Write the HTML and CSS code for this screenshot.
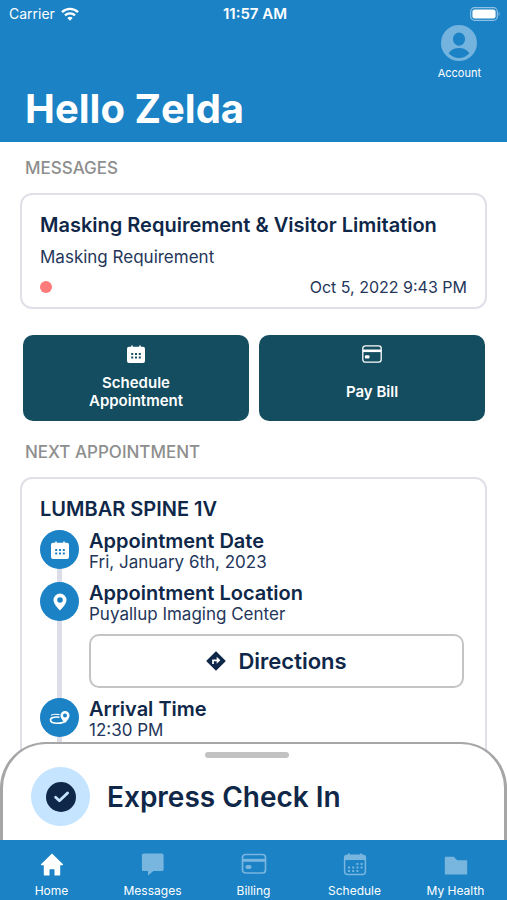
FILE: index.html
```html
<!DOCTYPE html>
<html lang="en">
<head>
    <meta charset="UTF-8">
    <meta name="viewport" content="width=device-width, initial-scale=1.0">
    <title>Patient Home</title>
    <link rel="stylesheet" href="styles.css">
</head>
<body>
    <div class="app">
        <header class="header">
            <div class="status-bar">
                <div class="carrier">
                    <span>Carrier</span>
                    <svg width="18" height="14" viewBox="0 0 18 14" fill="none" stroke="#fff" stroke-width="2.4">
                        <path d="M1 5.2a11.4 11.4 0 0 1 16 0"/>
                        <path d="M4 8.4a7.2 7.2 0 0 1 10 0"/>
                        <path d="M9 13.8L6.3 11a3.8 3.8 0 0 1 5.4 0z" fill="#fff" stroke="none"/>
                    </svg>
                </div>
                <span class="clock">11:57 AM</span>
                <svg class="battery" width="31" height="14" viewBox="0 0 31 14">
                    <rect x="0.7" y="0.7" width="26.6" height="12.6" rx="3.8" fill="none" stroke="#8fc1e4" stroke-width="1.2"/>
                    <rect x="2.4" y="2.4" width="23.2" height="9.2" rx="2.4" fill="#fff"/>
                    <path d="M28.7 4.8q2 2.2 0 4.4z" fill="#8fc1e4"/>
                </svg>
            </div>
            <div class="hero">
                <h1>Hello Zelda</h1>
                <a class="account" href="#account">
                    <svg width="36" height="36" viewBox="0 0 36 36">
                        <circle cx="18" cy="18" r="18" fill="#74b3de"/>
                        <ellipse cx="18" cy="14.2" rx="6" ry="6.6" fill="#1a82c5"/>
                        <path d="M7.6 28.3C9.8 24.8 13.6 23 18 23s8.2 1.8 10.4 5.3C25.6 31.3 22 33 18 33s-7.6-1.7-10.4-4.7z" fill="#1a82c5"/>
                    </svg>
                    <span>Account</span>
                </a>
            </div>
        </header>

        <div class="screen">
            <main class="content">
                <h2 class="section-title">MESSAGES</h2>
                <article class="card message">
                    <h3>Masking Requirement &amp; Visitor Limitation</h3>
                    <p>Masking Requirement</p>
                    <div class="message-meta">
                        <span class="unread-dot"></span>
                        <time>Oct 5, 2022 9:43 PM</time>
                    </div>
                </article>

                <div class="actions">
                    <button class="action" type="button">
                        <svg width="18" height="18" viewBox="0 0 18 18">
                            <path fill="#fff" d="M2 1.8h2.2V.5h1.6v1.3h6.4V.5h1.6v1.3H16a2 2 0 0 1 2 2V16a2 2 0 0 1-2 2H2a2 2 0 0 1-2-2V3.8a2 2 0 0 1 2-2z"/>
                            <path stroke="#134d5f" stroke-width="2" stroke-dasharray="2 1.8" d="M4.2 9h9.6M4.2 12.6h9.6"/>
                        </svg>
                        <span>Schedule<br>Appointment</span>
                    </button>
                    <button class="action" type="button">
                        <svg width="20" height="18" viewBox="0 0 20 18" fill="none" stroke="#fff">
                            <rect x="0.8" y="0.8" width="18.4" height="16.4" rx="2.6" stroke-width="1.3"/>
                            <path d="M1 5.8h18" stroke-width="2.6"/>
                            <rect x="2.9" y="10.3" width="4.6" height="3.2" rx="1" fill="#fff" stroke="none"/>
                        </svg>
                        <span>Pay Bill</span>
                    </button>
                </div>

                <h2 class="section-title">NEXT APPOINTMENT</h2>
                <article class="card appointment">
                    <h3>LUMBAR SPINE 1V</h3>
                    <ul class="timeline">
                        <li>
                            <span class="marker">
                                <svg width="18" height="18" viewBox="0 0 18 18">
                                    <path fill="#fff" d="M2 1.8h2.2V.5h1.6v1.3h6.4V.5h1.6v1.3H16a2 2 0 0 1 2 2V16a2 2 0 0 1-2 2H2a2 2 0 0 1-2-2V3.8a2 2 0 0 1 2-2z"/>
                                    <path stroke="#1a82c5" stroke-width="2" stroke-dasharray="2 1.8" d="M4.2 9h9.6M4.2 12.6h9.6"/>
                                </svg>
                            </span>
                            <div class="step">
                                <h4>Appointment Date</h4>
                                <p>Fri, January 6th, 2023</p>
                            </div>
                        </li>
                        <li>
                            <span class="marker">
                                <svg width="14" height="18" viewBox="0 0 14 18">
                                    <path fill="#fff" fill-rule="evenodd" d="M7 .5A6.5 6.5 0 0 1 13.5 7C13.5 10.5 9.5 15 7 17.5 4.5 15 .5 10.5 .5 7A6.5 6.5 0 0 1 7 .5zm0 3.7a2.8 2.8 0 1 0 0 5.6 2.8 2.8 0 0 0 0-5.6z"/>
                                </svg>
                            </span>
                            <div class="step">
                                <h4>Appointment Location</h4>
                                <p>Puyallup Imaging Center</p>
                                <button class="directions" type="button">
                                    <svg width="20" height="20" viewBox="0 0 20 20">
                                        <path fill="#0f2748" stroke="#0f2748" stroke-width="1.6" stroke-linejoin="round" d="M10 1.2L18.8 10 10 18.8 1.2 10z"/>
                                        <path fill="none" stroke="#fff" stroke-width="1.7" d="M7 13V9.3h4.5"/>
                                        <path fill="#fff" d="M10.7 5.8L14.4 9.3l-3.7 3.5z"/>
                                    </svg>
                                    <span>Directions</span>
                                </button>
                            </div>
                        </li>
                        <li>
                            <span class="marker">
                                <svg width="22" height="16" viewBox="0 0 22 16">
                                    <path fill="#fff" fill-rule="evenodd" d="M16 1a4.5 4.5 0 0 1 4.5 4.5c0 2.4-2.6 5.7-4.5 7.5-1.9-1.8-4.5-5.1-4.5-7.5A4.5 4.5 0 0 1 16 1zm0 2.5a2 2 0 1 0 0 4 2 2 0 0 0 0-4z"/>
                                    <path fill="none" stroke="#fff" stroke-width="1.1" d="M10.5 4.6C6 4 2.5 4.6 2.3 5.6"/>
                                    <path fill="none" stroke="#fff" stroke-width="1.6" d="M10.5 7.2C5 6.5 1.5 7.5 1.5 10c0 2.3 3 3.2 6.5 3.2 4 0 7.5-.8 7.5-2"/>
                                </svg>
                            </span>
                            <div class="step">
                                <h4>Arrival Time</h4>
                                <p>12:30 PM</p>
                            </div>
                        </li>
                    </ul>
                </article>
            </main>

            <section class="sheet">
                <div class="handle"></div>
                <a class="check-in" href="#check-in">
                    <span class="check-badge">
                        <svg width="30" height="30" viewBox="0 0 30 30">
                            <circle cx="15" cy="15" r="15" fill="#0f2748"/>
                            <path d="M9.6 15.2l3.8 3.6 8.2-7.8" fill="none" stroke="#c4e4ff" stroke-width="2.8" stroke-linecap="round" stroke-linejoin="round"/>
                        </svg>
                    </span>
                    <span>Express Check In</span>
                </a>
            </section>
        </div>

        <nav class="tabs">
            <a class="tab active" href="#home">
                <svg width="24" height="24" viewBox="0 0 24 24" fill="currentColor">
                    <path d="M12 1.5L23 12.2q.5 1-.6 1H20.2V22.5a1 1 0 0 1-1 1H14.5V17.2H9.5v6.3H4.8a1 1 0 0 1-1-1v-9.3H1.6q-1.1 0-.6-1z"/>
                </svg>
                <span>Home</span>
            </a>
            <a class="tab" href="#messages">
                <svg width="24" height="24" viewBox="0 0 24 24" fill="currentColor">
                    <path d="M2.5 1.5h18.5a1.6 1.6 0 0 1 1.6 1.6v14.3a1.6 1.6 0 0 1-1.6 1.6H12.5L7 23.5V19H2.5A1.6 1.6 0 0 1 .9 17.4V3.1a1.6 1.6 0 0 1 1.6-1.6z"/>
                </svg>
                <span>Messages</span>
            </a>
            <a class="tab" href="#billing">
                <svg width="26" height="24" viewBox="0 0 26 24" fill="none" stroke="currentColor">
                    <rect x="1.5" y="2.5" width="23" height="18.5" rx="3" stroke-width="1.7"/>
                    <path d="M1.5 8.3h23" stroke-width="3"/>
                    <rect x="4.5" y="13" width="6" height="4" rx="1.8" fill="currentColor" stroke="none"/>
                </svg>
                <span>Billing</span>
            </a>
            <a class="tab" href="#schedule">
                <svg width="24" height="24" viewBox="0 0 24 24" fill="none" stroke="currentColor">
                    <rect x="1.6" y="3.2" width="20.8" height="19.3" rx="3" stroke-width="1.5"/>
                    <path d="M1.5 5.8h21" stroke-width="4.5"/>
                    <path d="M6 1.5v4M18 1.5v4" stroke-width="2"/>
                    <path d="M13.4 12h6.4M5 15.5h15M5 19h10.6" stroke-width="2" stroke-dasharray="2 2.2"/>
                </svg>
                <span>Schedule</span>
            </a>
            <a class="tab" href="#health">
                <svg width="24" height="24" viewBox="0 0 24 24" fill="currentColor">
                    <path d="M1.5 4.8h8.3l3.4 3.5h10v14.2H.8V5.5z"/>
                </svg>
                <span>My Health</span>
            </a>
        </nav>
    </div>
</body>
</html>
```

FILE: styles.css
```css
* {
    margin: 0;
    padding: 0;
    box-sizing: border-box;
}

body {
    background: #fff;
    color: #0f2748;
    font-family: Inter, "Liberation Sans", sans-serif;
    font-size: 16px;
    line-height: 20px;
}

button {
    font: inherit;
    cursor: pointer;
}

a {
    color: inherit;
    text-decoration: none;
}

svg {
    display: block;
    flex-shrink: 0;
}

.app {
    display: flex;
    flex-direction: column;
    height: 100vh;
}

/* Header */
.header {
    background: #1a82c5;
    color: #fff;
    padding-bottom: 9px;
}

.status-bar {
    display: grid;
    grid-template-columns: 1fr auto 1fr;
    align-items: center;
    height: 25px;
    padding: 2px 6px 0 9px;
    font-size: 14px;
}

.carrier {
    display: flex;
    align-items: center;
    gap: 6px;
}

.clock {
    font-size: 15px;
    font-weight: 600;
}

.battery {
    justify-self: end;
}

.hero {
    display: flex;
    justify-content: space-between;
    align-items: flex-end;
    height: 108px;
    padding: 0 26px 0 25px;
}

.hero h1 {
    font-size: 40px;
    line-height: 48px;
    font-weight: 700;
}

.account {
    display: flex;
    flex-direction: column;
    align-items: center;
    align-self: flex-start;
    gap: 2px;
    font-size: 11px;
}

/* Content */
.screen {
    position: relative;
    flex: 1;
    min-height: 0;
}

.content {
    height: 100%;
    padding: 16px 20px 0;
    overflow-y: auto;
    scrollbar-width: none;
}

.section-title {
    padding-left: 5px;
    color: #8e8e8e;
    font-size: 17px;
    line-height: 20px;
    font-weight: 500;
}

.card {
    margin-top: 15px;
    padding: 18px;
    border: 2px solid #dfe0e8;
    border-radius: 12px;
}

.card h3 {
    font-size: 20px;
    line-height: 24px;
    font-weight: 600;
}

.card p,
.card time {
    color: #24365a;
}

.card p {
    font-size: 17px;
}

.message {
    padding-bottom: 10px;
}

.message p {
    margin: 10px 0;
}

.message-meta {
    display: flex;
    justify-content: space-between;
    align-items: center;
}

.unread-dot {
    width: 12px;
    height: 12px;
    border-radius: 50%;
    background: #ff7b7b;
}

.actions {
    display: grid;
    grid-template-columns: 1fr 1fr;
    gap: 10px;
    margin: 26px 2px 21px 3px;
}

.action {
    display: flex;
    flex-direction: column;
    align-items: center;
    height: 86px;
    padding: 10px 10px 0;
    border: none;
    border-radius: 10px;
    background: #134d5f;
    color: #fff;
    font-size: 15px;
    line-height: 18px;
    font-weight: 600;
}

.action span {
    display: flex;
    flex: 1;
    flex-direction: column;
    justify-content: center;
}

/* Appointment */
.timeline {
    list-style: none;
    margin-top: 9px;
}

.timeline li {
    position: relative;
    display: flex;
    gap: 10px;
    padding-bottom: 10px;
}

.timeline li::before {
    content: "";
    position: absolute;
    top: 0;
    bottom: 0;
    left: 17px;
    width: 5px;
    background: #dcdde8;
}

.marker {
    position: relative;
    display: flex;
    flex-shrink: 0;
    align-items: center;
    justify-content: center;
    width: 39px;
    height: 39px;
    border-radius: 50%;
    background: #1a82c5;
}

.step {
    flex: 1;
    padding-right: 3px;
}

.step h4 {
    font-size: 20px;
    line-height: 22px;
    font-weight: 600;
}

.directions {
    display: flex;
    align-items: center;
    justify-content: center;
    gap: 12px;
    width: 100%;
    height: 54px;
    margin-top: 10px;
    border: 2px solid #c4c4c4;
    border-radius: 10px;
    background: #fff;
    color: #0f2748;
    font-size: 22px;
    font-weight: 600;
}

/* Check in sheet */
.sheet {
    position: absolute;
    right: 0;
    bottom: 0;
    left: 0;
    padding: 8px 28px 14px;
    border: 2px solid #a6a6a6;
    border-width: 2px 3px 0;
    border-radius: 46px 46px 0 0;
    background: #fff;
}

.handle {
    width: 84px;
    height: 6px;
    margin: 0 0 9px 39%;
    border-radius: 3px;
    background: #c2c2c2;
}

.check-in {
    display: flex;
    align-items: center;
    gap: 17px;
    font-size: 28px;
    line-height: 32px;
    font-weight: 600;
}

.check-badge {
    display: flex;
    align-items: center;
    justify-content: center;
    width: 59px;
    height: 59px;
    border-radius: 50%;
    background: #c4e4ff;
}

/* Bottom tabs */
.tabs {
    display: grid;
    grid-template-columns: repeat(5, 1fr);
    height: 60px;
    padding: 12px 1px 0;
    background: #1a82c5;
    color: #fff;
}

.tab {
    display: flex;
    flex-direction: column;
    align-items: center;
    gap: 5px;
    font-size: 12px;
}

.tab svg {
    color: #78b5df;
}

.tab.active svg {
    color: #fff;
}
```
